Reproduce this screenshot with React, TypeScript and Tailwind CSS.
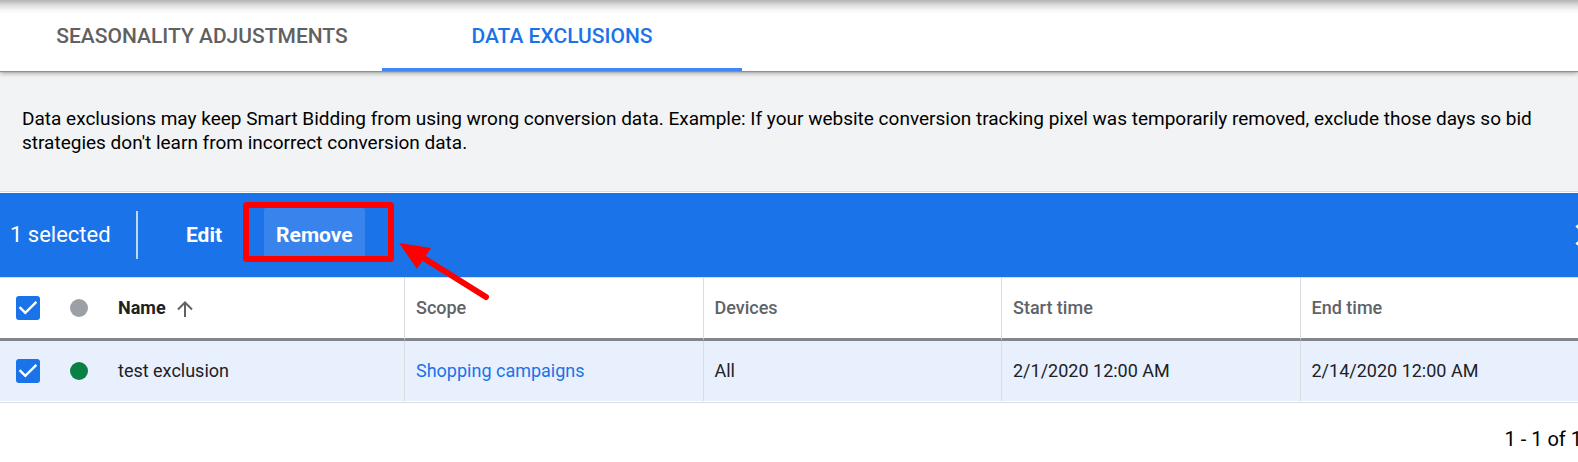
import { useState } from "react";

type Exclusion = {
  id: string;
  name: string;
  scope: string;
  devices: string;
  startTime: string;
  endTime: string;
};

const exclusions: Exclusion[] = [
  {
    id: "1",
    name: "test exclusion",
    scope: "Shopping campaigns",
    devices: "All",
    startTime: "2/1/2020 12:00 AM",
    endTime: "2/14/2020 12:00 AM",
  },
];

const columns = ["Scope", "Devices", "Start time", "End time"];

function Checkbox({ label }: { label: string }) {
  const [checked, setChecked] = useState(true);

  return (
    <div className="grid size-6">
      <input
        type="checkbox"
        aria-label={label}
        checked={checked}
        onChange={(e) => setChecked(e.target.checked)}
        className="col-start-1 row-start-1 size-6 cursor-pointer appearance-none rounded-[3px] border-2 border-[#5f6368] checked:border-[#1a73e8] checked:bg-[#1a73e8]"
      />
      {checked && (
        <svg
          viewBox="0 0 24 24"
          className="pointer-events-none col-start-1 row-start-1 size-6"
          fill="none"
          stroke="white"
          strokeWidth="2.4"
        >
          <path d="M3.6 11.2 9.3 16.8 20.4 5.8" />
        </svg>
      )}
    </div>
  );
}

// Red frame and arrow that point at the Remove button
function Callout() {
  return (
    <>
      <div className="pointer-events-none absolute -top-1.5 -left-[21px] h-15 w-[151px] rounded-[4px] border-6 border-[#ff0000]" />
      <svg
        className="pointer-events-none absolute top-[34px] left-[134px] z-10"
        width="92"
        height="60"
        viewBox="0 0 92 60"
        fill="#ff0000"
      >
        <path d="M1 1 33 6 19 26.8Z" />
        <path d="M24 15 88 55" stroke="#ff0000" strokeWidth="6" strokeLinecap="round" />
      </svg>
    </>
  );
}

export default function App() {
  return (
    <main className="overflow-hidden bg-white font-[Roboto,sans-serif] text-black">
      <nav
        role="tablist"
        className="relative flex h-[71px] bg-[linear-gradient(to_bottom,#b4b4b4,#dcdcdc_5px,#f6f6f6_10px,#fff_14px)] pl-[22px] shadow-[0_1px_1px_#8d9194,0_2px_5px_#9a9a9a]"
      >
        <button
          type="button"
          role="tab"
          aria-selected={false}
          className="w-[360px] border-b-3 border-transparent pt-1.5 text-[21px] font-medium text-[#616161]"
        >
          SEASONALITY ADJUSTMENTS
        </button>
        <button
          type="button"
          role="tab"
          aria-selected={true}
          className="w-[360px] border-b-3 border-[#4285f4] pt-1.5 text-[21px] font-medium text-[#1a73e8]"
        >
          DATA EXCLUSIONS
        </button>
      </nav>

      <section className="border-b border-[#dadce0] bg-[#f1f3f4] pt-9 pb-9">
        <p className="pl-[22px] text-[19px] leading-6">
          Data exclusions may keep Smart Bidding from using wrong conversion data.
          Example: If your website conversion tracking pixel was temporarily removed,
          exclude those days so bid strategies don't learn from incorrect conversion
          data.
        </p>
      </section>

      {/* the grid runs a little past the right edge */}
      <div className="-mr-5 mt-px">
        <div className="flex h-21 items-center bg-[#1a73e8] text-white">
          <span className="w-[136px] pb-0.5 pl-[10px] text-[22px]">1 selected</span>
          <span className="h-12 w-0.5 bg-[#bfd8f9]" />
          <button type="button" className="ml-9 h-12 px-3 pt-0.5 text-[21px] font-bold">
            Edit
          </button>
          <div className="relative ml-[30px]">
            <button
              type="button"
              className="h-[54px] rounded-[2px] bg-[#3884ec] px-3 pt-0.5 text-[21px] font-bold"
            >
              Remove
            </button>
            <Callout />
          </div>
          <button type="button" aria-label="Close" className="ml-auto">
            <svg width="24" height="24" viewBox="0 0 24 24" stroke="white" strokeWidth="3">
              <path d="M2.5 2.5 21.5 21.5M21.5 2.5 2.5 21.5" />
            </svg>
          </button>
        </div>

        <table className="w-full table-fixed border-separate border-spacing-0 border-t border-b border-[#dadce0] pb-px text-left text-[18px]">
          <thead>
            <tr className="h-[63px] text-[#5f6368]">
              <th className="w-[70px] border-b-3 border-[#80868b] pl-4">
                <Checkbox label="Select all" />
              </th>
              <th className="w-12 border-b-3 border-[#80868b]" aria-label="Status">
                <span className="block size-[18px] rounded-full bg-[#9aa0a6]" />
              </th>
              <th className="w-[286px] border-b-3 border-[#80868b] pb-0.5 font-bold text-[#202124]">
                <span className="flex items-center gap-[11px]">
                  Name
                  <svg
                    className="mt-1"
                    width="16"
                    height="16"
                    viewBox="0 0 16 16"
                    fill="none"
                    stroke="#616161"
                    strokeWidth="2"
                  >
                    <path d="M8 16V1.5M1 8.5 8 1.5 15 8.5" />
                  </svg>
                </span>
              </th>
              {columns.map((column) => (
                <th
                  key={column}
                  className="border-b-3 border-l border-b-[#80868b] border-l-[#dadce0] pb-0.5 pl-[11px] font-medium"
                >
                  {column}
                </th>
              ))}
            </tr>
          </thead>

          <tbody>
            {exclusions.map((item) => (
              <tr key={item.id} className="h-15 bg-[#e8f0fe] text-[#202124]">
                <td className="pl-4">
                  <Checkbox label={`Select ${item.name}`} />
                </td>
                <td>
                  <span className="block size-[18px] rounded-full bg-[#0b8043]" />
                </td>
                <td className="pb-0.5">{item.name}</td>
                <td className="border-l border-[#dadce0] pb-0.5 pl-[11px]">
                  <a href="#scope" className="text-[#1a73e8]">
                    {item.scope}
                  </a>
                </td>
                <td className="border-l border-[#dadce0] pb-0.5 pl-[11px]">{item.devices}</td>
                <td className="border-l border-[#dadce0] pb-0.5 pl-[11px]">{item.startTime}</td>
                <td className="border-l border-[#dadce0] pb-0.5 pl-[11px]">{item.endTime}</td>
              </tr>
            ))}
          </tbody>
        </table>

        <footer className="flex h-[59px] items-center justify-end pt-3 pr-4 text-[20px]">
          1 - 1 of 1
        </footer>
      </div>
    </main>
  );
}
